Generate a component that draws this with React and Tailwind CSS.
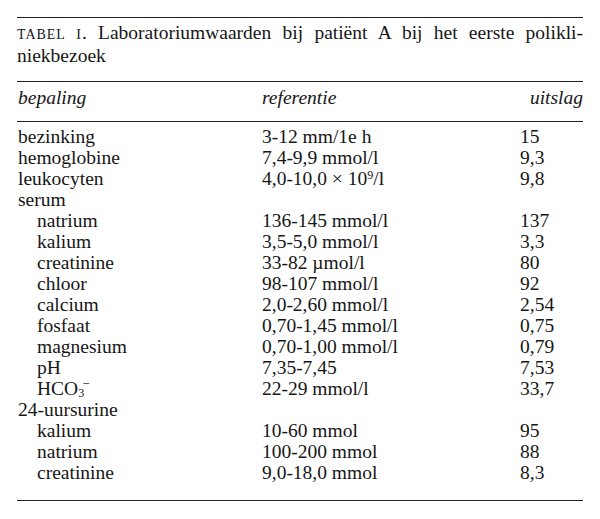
import React from "react";

const rows = [
  { name: "bezinking", ref: "3-12 mm/1e h", val: "15" },
  { name: "hemoglobine", ref: "7,4-9,9 mmol/l", val: "9,3" },
  {
    name: "leukocyten",
    ref: (
      <>
        4,0-10,0 × 10
        <span className="relative -top-[6px] text-[12px] leading-none">9</span>/l
      </>
    ),
    val: "9,8",
  },
  { name: "serum", ref: "", val: "" },
  { name: "natrium", ref: "136-145 mmol/l", val: "137", indent: true },
  { name: "kalium", ref: "3,5-5,0 mmol/l", val: "3,3", indent: true },
  { name: "creatinine", ref: "33-82 µmol/l", val: "80", indent: true },
  { name: "chloor", ref: "98-107 mmol/l", val: "92", indent: true },
  { name: "calcium", ref: "2,0-2,60 mmol/l", val: "2,54", indent: true },
  { name: "fosfaat", ref: "0,70-1,45 mmol/l", val: "0,75", indent: true },
  { name: "magnesium", ref: "0,70-1,00 mmol/l", val: "0,79", indent: true },
  { name: "pH", ref: "7,35-7,45", val: "7,53", indent: true },
  {
    name: (
      <>
        HCO
        <span className="relative inline-block w-[12px] h-[10px]">
          <span className="absolute left-0 top-[2px] text-[12px] leading-none">3</span>
          <span className="absolute left-[5px] -top-[9px] text-[12px] leading-none">–</span>
        </span>
      </>
    ),
    ref: "22-29 mmol/l",
    val: "33,7",
    indent: true,
  },
  { name: "24-uursurine", ref: "", val: "" },
  { name: "kalium", ref: "10-60 mmol", val: "95", indent: true },
  { name: "natrium", ref: "100-200 mmol", val: "88", indent: true },
  { name: "creatinine", ref: "9,0-18,0 mmol", val: "8,3", indent: true },
];

export default function App() {
  return (
    <div className="w-[600px] h-[519px] bg-white text-[#161616] px-[17px] pt-[17px] font-['Liberation_Serif','Times_New_Roman',serif]">
      <div className="border-t-[1.5px] border-[#222]" />
      <div className="text-[19.5px] leading-[21px] pt-[4px]">
        <div className="text-justify [text-align-last:justify]">
          <span className="text-[14px] tracking-[0.07em]">TABEL I</span>. Laboratoriumwaarden bij patiënt A bij het eerste polikli-
        </div>
        <div>niekbezoek</div>
      </div>
      <div className="mt-[15px] border-t-[1.5px] border-[#222]" />
      <div className="grid grid-cols-[245px_258px_1fr] text-[19.5px] leading-[21px] italic pt-[5px] pb-[13px]">
        <div className="pl-px">bepaling</div>
        <div>referentie</div>
        <div className="text-right">uitslag</div>
      </div>
      <div className="border-t-[1.5px] border-[#222]" />
      <div className="grid grid-cols-[245px_258px_1fr] text-[19.5px] leading-[21px] pt-[4px] pb-[17px]">
        {rows.map((r, i) => (
          <React.Fragment key={i}>
            <div className={r.indent ? "pl-[20px]" : "pl-px"}>{r.name}</div>
            <div>{r.ref}</div>
            <div>{r.val}</div>
          </React.Fragment>
        ))}
      </div>
      <div className="border-t-[1.5px] border-[#222]" />
    </div>
  );
}
